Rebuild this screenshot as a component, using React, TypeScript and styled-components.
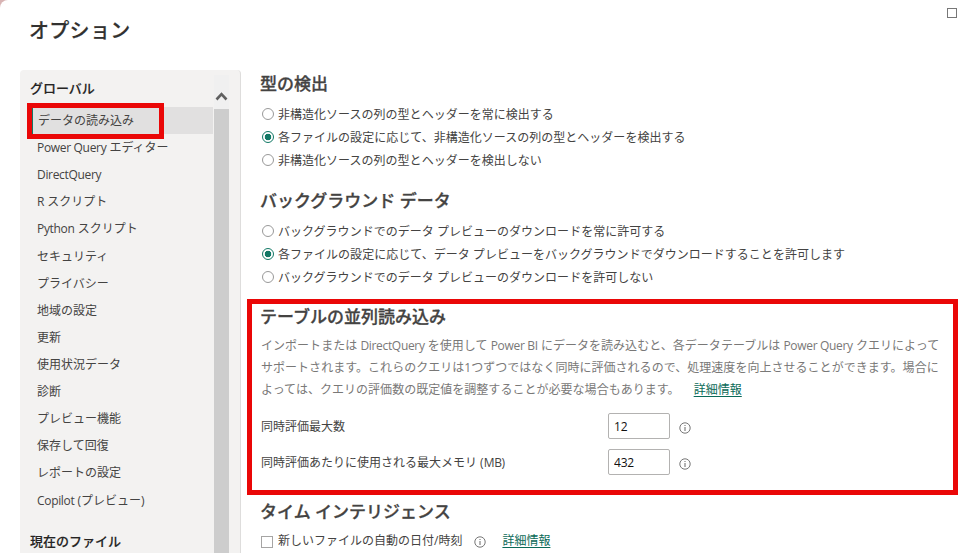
import React, { useState } from "react";
import styled, { createGlobalStyle } from "styled-components";

const GlobalStyle = createGlobalStyle`
  * {
    box-sizing: border-box;
  }
  body {
    margin: 0;
    overflow: hidden;
    background: #d8b4b4;
    font-family: "Open Sans", "Noto Sans CJK JP", sans-serif;
    font-size: 12px;
    color: #444342;
  }
`;
const Dialog = styled.div`
  position: relative;
  display: flex;
  flex-direction: column;
  width: 959px;
  height: 553px;
  overflow: hidden;
  background: #fff;
  border-radius: 8px 0 0 0;
`;
const TitleBar = styled.header`
  display: flex;
  justify-content: space-between;
  height: 70px;
  padding: 8px 2px 0 29px;
`;
const Title = styled.h1`
  margin: 7px 0 0;
  font-size: 20px;
  line-height: 32px;
  font-weight: 500;
  letter-spacing: 0.3px;
  color: #323130;
  -webkit-text-stroke: 0.2px #323130;
`;
const MaximizeButton = styled.button`
  width: 10px;
  height: 10px;
  padding: 0;
  border: 1px solid #777;
  background: #fff;
`;
const Body = styled.div`
  display: flex;
  flex: 1;
  min-height: 0;
`;
const Sidebar = styled.nav`
  display: flex;
  width: 221px;
  margin-left: 20px;
  background: #f3f2f1;
  border-right: 1px solid #dedddc;
  border-radius: 4px 4px 0 0;
`;
const SidebarList = styled.div`
  width: 193px;
  white-space: nowrap;
`;
const GroupTitle = styled.h4<{ $top: number }>`
  margin: 0;
  padding: ${(p) => p.$top}px 0 0 10px;
  font-size: 13px;
  line-height: 20px;
  font-weight: 500;
  color: #252423;
  -webkit-text-stroke: 0.15px #252423;
`;
const Items = styled.div`
  padding: 9px 0 0 12px;
`;
const Item = styled.div<{ $active: boolean }>`
  height: 27.12px;
  padding-left: 5px;
  line-height: 27px;
  background: ${(p) => (p.$active ? "#e1e0e0" : "transparent")};
  border-left: ${(p) => (p.$active ? "1px solid #117865" : "none")};
  cursor: pointer;
`;
const Scrollbar = styled.div`
  display: flex;
  flex-direction: column;
  width: 16px;
  padding: 5px 0 0 1px;
`;
const ScrollUp = styled.div`
  display: flex;
  justify-content: center;
  height: 34px;
  padding-top: 16px;
  background: #f0f0f0;
`;
const ScrollThumb = styled.div`
  flex: 1;
  background: #cdcdcd;
`;
const Content = styled.main`
  flex: 1;
  padding: 3px 0 0 20px;
  white-space: nowrap;
`;
const Section = styled.section<{ $gap: number }>`
  margin-bottom: ${(p) => p.$gap}px;
`;
const SectionTitle = styled.h2`
  margin: 0 0 7px -1px;
  font-size: 17px;
  line-height: 22px;
  font-weight: 500;
  -webkit-text-stroke: 0.3px #444342;
`;
const Option = styled.label`
  display: flex;
  align-items: center;
  gap: 4px;
  height: 23px;
  padding-left: 1px;
  letter-spacing: 0.02px;
`;
const OptionText = styled.span`
  padding-top: 1px;
`;
const Radio = styled.input`
  appearance: none;
  width: 12px;
  height: 12px;
  margin: 1px 0 0;
  border: 1px solid #999;
  border-radius: 50%;
  background: #fff;
  &:checked {
    border-color: #117865;
    background: radial-gradient(circle, #117865 3px, #fff 3.6px);
  }
`;
const Latin = styled.span`
  letter-spacing: -0.32px;
`;
const Description = styled.p`
  margin: 0 0 7px;
  line-height: 22px;
  color: #797877;
`;
const Line = styled.span`
  display: block;
  height: 22px;
  letter-spacing: 0.03px;
`;
const Link = styled.a<{ $left: number }>`
  margin-left: ${(p) => p.$left}px;
  color: #0b6a58;
  text-decoration: underline;
  text-underline-offset: 2px;
`;
const Field = styled.div`
  display: flex;
  align-items: center;
  height: 36px;
`;
const FieldLabel = styled.label`
  width: 347px;
`;
const NumberInput = styled.input`
  width: 62px;
  height: 26px;
  margin-right: 9px;
  padding: 1px 0 0 5px;
  border: 1px solid #b3b2b1;
  border-radius: 2px;
  font: inherit;
  letter-spacing: -0.2px;
  color: #111;
`;
const InfoSvg = styled.svg`
  flex: none;
  margin-top: 4px;
`;
const CheckRow = styled.div`
  display: flex;
  align-items: center;
  height: 22px;
  line-height: 22px;
`;
const Checkbox = styled.input`
  appearance: none;
  width: 12px;
  height: 12px;
  margin: 1px 5px 0 0;
  border: 1px solid #a6a5a4;
  background: #fff;
`;
const InfoGap = styled.span`
  display: flex;
  margin: -2px 0 0 12px;
`;
const Highlight = styled.div<{ $x: number; $y: number; $w: number; $h: number }>`
  position: absolute;
  left: ${(p) => p.$x}px;
  top: ${(p) => p.$y}px;
  width: ${(p) => p.$w}px;
  height: ${(p) => p.$h}px;
  border: 5px solid #ea0707;
  pointer-events: none;
`;

const items = [
  "データの読み込み",
  "Power Query エディター",
  "DirectQuery",
  "R スクリプト",
  "Python スクリプト",
  "セキュリティ",
  "プライバシー",
  "地域の設定",
  "更新",
  "使用状況データ",
  "診断",
  "プレビュー機能",
  "保存して回復",
  "レポートの設定",
  "Copilot (プレビュー)",
];

const typeOptions = [
  "非構造化ソースの列の型とヘッダーを常に検出する",
  "各ファイルの設定に応じて、非構造化ソースの列の型とヘッダーを検出する",
  "非構造化ソースの列の型とヘッダーを検出しない",
];

const backgroundOptions = [
  "バックグラウンドでのデータ プレビューのダウンロードを常に許可する",
  "各ファイルの設定に応じて、データ プレビューをバックグラウンドでダウンロードすることを許可します",
  "バックグラウンドでのデータ プレビューのダウンロードを許可しない",
];

// latin words are set a bit tighter than the kana around them
const Mixed = ({ text }: { text: string }) => (
  <>
    {text
      .split(/([A-Za-z]+(?: [A-Za-z]+)*)/)
      .map((part, i) => (i % 2 ? <Latin key={i}>{part}</Latin> : part))}
  </>
);

const InfoIcon = () => (
  <InfoSvg width="12" height="12" viewBox="0 0 12 12" fill="none">
    <circle cx="6" cy="6" r="5.2" stroke="#666" strokeWidth="0.9" />
    <path d="M6 5v4" stroke="#666" />
    <path d="M6 3v1" stroke="#666" />
  </InfoSvg>
);

interface IRadioGroup {
  name: string;
  options: string[];
}

const RadioGroup = ({ name, options }: IRadioGroup) => {
  const [selected, setSelected] = useState(1);

  return (
    <div>
      {options.map((option, i) => (
        <Option key={option}>
          <Radio
            type="radio"
            name={name}
            checked={selected === i}
            onChange={() => setSelected(i)}
          />
          <OptionText>{option}</OptionText>
        </Option>
      ))}
    </div>
  );
};

const App = () => {
  const [active, setActive] = useState(0);
  const [maxCount, setMaxCount] = useState("12");
  const [maxMemory, setMaxMemory] = useState("432");

  return (
    <>
      <GlobalStyle />
      <Dialog>
        <TitleBar>
          <Title>オプション</Title>
          <MaximizeButton />
        </TitleBar>
        <Body>
          <Sidebar>
            <SidebarList>
              <GroupTitle $top={8}>グローバル</GroupTitle>
              <Items>
                {items.map((item, i) => (
                  <Item
                    key={item}
                    $active={active === i}
                    onClick={() => setActive(i)}
                  >
                    <Mixed text={item} />
                  </Item>
                ))}
              </Items>
              <GroupTitle $top={17}>現在のファイル</GroupTitle>
            </SidebarList>
            <Scrollbar>
              <ScrollUp>
                <svg width="13" height="11" viewBox="0 0 13 11">
                  <path
                    d="M1.5 8.5L6.5 3.2L11.5 8.5"
                    fill="none"
                    stroke="#606060"
                    strokeWidth="2.6"
                  />
                </svg>
              </ScrollUp>
              <ScrollThumb />
            </Scrollbar>
          </Sidebar>
          <Content>
            <Section $gap={19}>
              <SectionTitle>型の検出</SectionTitle>
              <RadioGroup name="type" options={typeOptions} />
            </Section>
            <Section $gap={18}>
              <SectionTitle>バックグラウンド データ</SectionTitle>
              <RadioGroup name="background" options={backgroundOptions} />
            </Section>
            <Section $gap={21}>
              <SectionTitle>テーブルの並列読み込み</SectionTitle>
              <Description>
                <Line>
                  <Mixed text="インポートまたは DirectQuery を使用して Power BI にデータを読み込むと、各データテーブルは Power Query クエリによって" />
                </Line>
                <Line>
                  サポートされます。これらのクエリは1つずつではなく同時に評価されるので、処理速度を向上させることができます。場合に
                </Line>
                <Line>
                  よっては、クエリの評価数の既定値を調整することが必要な場合もあります。
                  <Link $left={14}>詳細情報</Link>
                </Line>
              </Description>
              <Field>
                <FieldLabel>同時評価最大数</FieldLabel>
                <NumberInput
                  value={maxCount}
                  onChange={(e) => setMaxCount(e.currentTarget.value)}
                />
                <InfoIcon />
              </Field>
              <Field>
                <FieldLabel>
                  <Mixed text="同時評価あたりに使用される最大メモリ (MB)" />
                </FieldLabel>
                <NumberInput
                  value={maxMemory}
                  onChange={(e) => setMaxMemory(e.currentTarget.value)}
                />
                <InfoIcon />
              </Field>
            </Section>
            <Section $gap={0}>
              <SectionTitle>タイム インテリジェンス</SectionTitle>
              <CheckRow>
                <Checkbox type="checkbox" />
                <span>新しいファイルの自動の日付/時刻</span>
                <InfoGap>
                  <InfoIcon />
                </InfoGap>
                <Link $left={16}>詳細情報</Link>
              </CheckRow>
            </Section>
          </Content>
        </Body>
        <Highlight $x={27} $y={103} $w={137} $h={36} />
        <Highlight $x={247} $y={299} $w={711} $h={196} />
      </Dialog>
    </>
  );
};

export default App;
